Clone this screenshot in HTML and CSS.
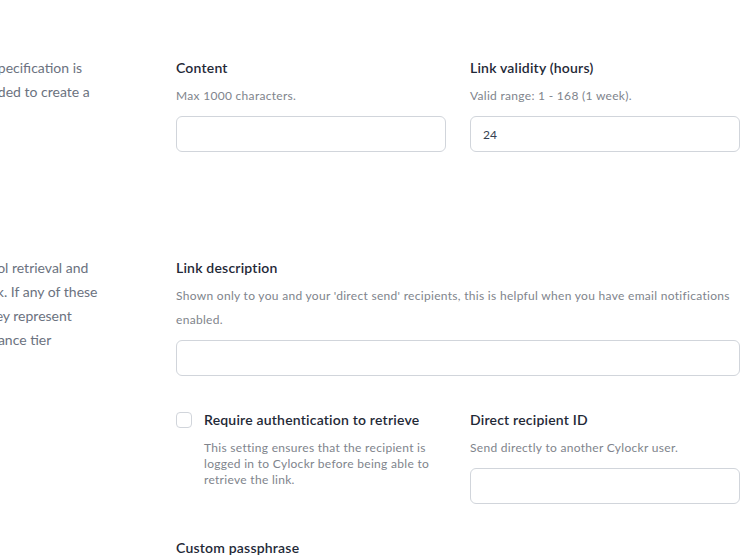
FILE: index.html
```html
<!DOCTYPE html>
<html lang="en">
<head>
<meta charset="utf-8">
<title>Link specification</title>
<link rel="stylesheet" href="styles.css">
</head>
<body>
<div class="page">
  <section class="section first">
    <aside class="aside">
      <p>Each Cylockr link's specification is<br>which is what is needed to create a</p>
    </aside>
    <div class="fields two">
      <div class="field">
        <label class="label" for="content">Content</label>
        <p class="help">Max 1000 characters.</p>
        <input class="input" id="content" type="text">
      </div>
      <div class="field">
        <label class="label" for="validity">Link validity (hours)</label>
        <p class="help">Valid range: 1 - 168 (1 week).</p>
        <input class="input" id="validity" type="text" value="24">
      </div>
    </div>
  </section>

  <section class="section second">
    <aside class="aside">
      <p>These options control retrieval and<br>who may see the link. If any of these<br>are set, note that they represent<br>the higher link assurance tier</p>
    </aside>
    <div class="fields">
      <div class="field">
        <label class="label" for="desc">Link description</label>
        <p class="help">Shown only to you and your 'direct send' recipients, this is helpful when you have email notifications enabled.</p>
        <input class="input" id="desc" type="text">
      </div>
      <div class="two row">
        <div class="check">
          <span class="box"></span>
          <div class="check-text">
            <div class="label">Require authentication to retrieve</div>
            <p class="small">This setting ensures that the recipient is logged in to Cylockr before being able to retrieve the link.</p>
          </div>
        </div>
        <div class="field">
          <label class="label" for="rid">Direct recipient ID</label>
          <p class="help">Send directly to another Cylockr user.</p>
          <input class="input" id="rid" type="text">
        </div>
      </div>
      <div class="field row">
        <label class="label" for="pass">Custom passphrase</label>
      </div>
    </div>
  </section>
</div>
</body>
</html>
```
FILE: styles.css
```css
html, body {
  margin: 0;
  padding: 0;
  background: #ffffff;
  overflow: hidden;
}
body {
  font-family: "Lato", "Open Sans", sans-serif;
  color: #1f2937;
  width: 756px;
  height: 560px;
}
.page {
  margin-left: -125px;
  margin-right: 16px;
}
.section {
  display: grid;
  grid-template-columns: 277px 1fr;
  column-gap: 24px;
}
.first { padding-top: 56px; }
.second { padding-top: 104px; }
.aside p {
  margin: 0;
  font-size: 14px;
  line-height: 24px;
  color: #6b7280;
  white-space: nowrap;
}
.fields.two, .two {
  display: grid;
  grid-template-columns: 1fr 1fr;
  column-gap: 24px;
}
.field { display: flex; flex-direction: column; }
.label {
  font-size: 14px;
  line-height: 20px;
  font-weight: 600;
  letter-spacing: 0.2px;
  color: #1f2937;
  margin-top: 2px;
}
.help {
  margin: 6px 0 0;
  font-size: 12px;
  line-height: 24px;
  letter-spacing: 0.3px;
  color: #80848c;
  font-weight: 400;
}
.input {
  margin-top: 8px;
  height: 36px;
  box-sizing: border-box;
  border: 1px solid #d1d5db;
  border-radius: 6px;
  padding: 0 12px;
  font-family: inherit;
  font-size: 12px;
  color: #374151;
  background: #fff;
  outline: none;
}
.row { margin-top: 32px; }
.check { display: flex; gap: 12px; align-items: flex-start; padding-top: 4px; }
.box {
  flex: none;
  width: 16px;
  height: 16px;
  box-sizing: border-box;
  border: 1px solid #d1d5db;
  border-radius: 4px;
  background: #fff;
}
.check-text { margin-top: -2px; }
.check-text .label { margin-top: 0; }
.small {
  margin: 10px 0 0;
  font-size: 12px;
  line-height: 16px;
  letter-spacing: 0.3px;
  color: #80848c;
  font-weight: 400;
  max-width: 242px;
}
```
